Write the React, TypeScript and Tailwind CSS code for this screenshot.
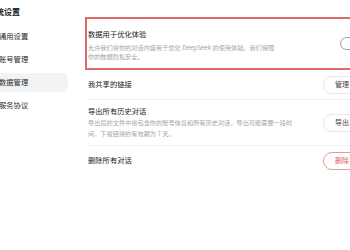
import React from 'react';

// Settings dialog, "数据管理" tab (cropped view)

const navItems = ['通用设置', '账号管理', '数据管理', '服务协议'];

function PillButton({ label, danger }: { label: string; danger?: boolean }) {
  return (
    <button
      className={`h-[18px] w-[38px] shrink-0 rounded-full border text-[7px] leading-none ${
        danger
          ? 'border-[#e59a9a] text-[#e05858]'
          : 'border-[#e6e6e6] text-[#444]'
      }`}
    >
      {label}
    </button>
  );
}

export default function App() {
  return (
    <div
      className="flex h-[250px] w-[350px] overflow-hidden bg-white"
      style={{ fontFamily: '"Noto Sans CJK SC", "Noto Sans", sans-serif' }}
    >
      {/* Sidebar */}
      <div className="ml-[-12px] w-[80px] shrink-0 pt-[6px]">
        <div className="h-[12px] text-[8px] font-bold leading-[12px] text-[#222]">系统设置</div>
        <div className="mt-[9px] flex flex-col gap-[4px]">
          {navItems.map((item) => (
            <div
              key={item}
              className={`flex h-[19px] items-center rounded-[6px] pl-[11px] text-[7.3px] text-[#2a2a2a] ${
                item === '数据管理' ? 'bg-[#f2f3f5]' : ''
              }`}
            >
              {item}
            </div>
          ))}
        </div>
      </div>

      {/* Content */}
      <div className="ml-[17px] w-[300px] shrink-0 pt-[17px]">
        {/* Highlighted row */}
        <div className="flex h-[53px] items-center border-2 border-[#dd6a6a] pl-[1px] pr-[19px]">
          <div className="flex-1 pt-[3px]">
            <div className="text-[7.3px] leading-[10px] text-[#222]">数据用于优化体验</div>
            <div className="mt-[4px] whitespace-nowrap text-[6.2px] leading-[9.5px] text-[#a6a6a6]">
              允许我们将你的对话内容用于优化 DeepSeek 的使用体验。我们保障
              <br />
              你的数据隐私安全。
            </div>
          </div>
          <div className="flex h-[13px] w-[24px] items-center rounded-full border-[1.5px] border-[#9c9c9c] px-[1px]">
            <div className="h-[9px] w-[9px] rounded-full bg-white" />
          </div>
        </div>

        <div className="pl-[3px] pr-[24px]">
          <div className="flex h-[30px] items-center justify-between border-b border-[#f0f0f0]">
            <span className="text-[7.3px] text-[#222]">我共享的链接</span>
            <PillButton label="管理" />
          </div>

          <div className="flex h-[46px] items-center justify-between border-b border-[#f0f0f0]">
            <div>
              <div className="text-[7.3px] leading-[10px] text-[#222]">导出所有历史对话</div>
              <div className="mt-[1px] whitespace-nowrap text-[6.2px] leading-[11px] text-[#a6a6a6]">
                导出后的文件中将包含你的账号信息和所有历史对话，导出可能需要一段时
                <br />
                间，下载链接的有效期为 7 天。
              </div>
            </div>
            <PillButton label="导出" />
          </div>

          <div className="flex h-[29px] items-center justify-between">
            <span className="text-[7.3px] text-[#222]">删除所有对话</span>
            <PillButton label="删除" danger />
          </div>
        </div>
      </div>
    </div>
  );
}
